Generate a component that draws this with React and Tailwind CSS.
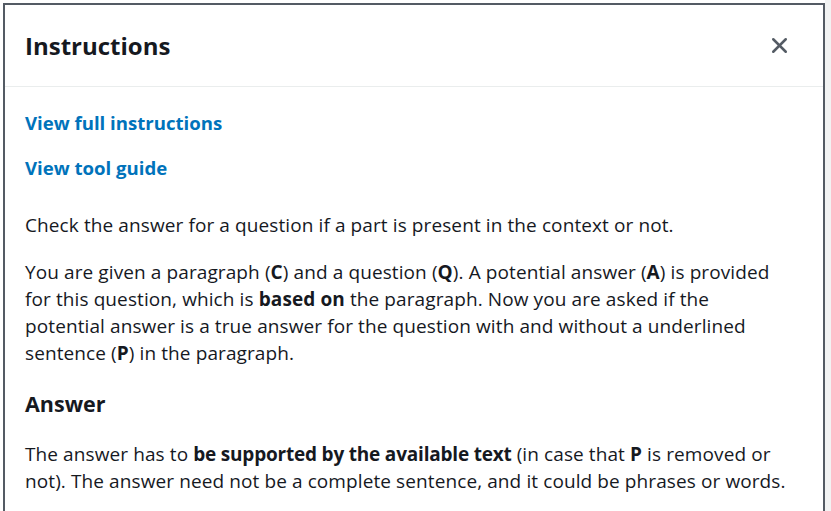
import { X } from 'lucide-react';

export default function App() {
  return (
    <div
      className="flex h-[511px] w-[831px] overflow-hidden bg-white text-[#16191f]"
      style={{ fontFamily: '"Open Sans", "Noto Sans", sans-serif' }}
    >
      <div className="ml-[3px] mt-[3px] flex w-[822px] flex-col border-2 border-b-0 border-[#545b64]">
        <div className="flex h-[82px] shrink-0 items-center justify-between border-b border-[#eaeded] pl-[20px] pr-[31px]">
          <h2 className="text-[24px] font-bold leading-none">Instructions</h2>
          <button className="text-[#545b64]">
            <X size={25} strokeWidth={2.4} />
          </button>
        </div>

        <div className="px-[20px] pt-[22px] text-[19px] leading-[27px] tracking-[0.1px]">
          <a className="block text-[18.6px] font-bold tracking-normal text-[#0073bb]">View full instructions</a>
          <a className="mt-[18px] block text-[18.6px] font-bold tracking-normal text-[#0073bb]">View tool guide</a>

          <p className="mt-[31px]">Check the answer for a question if a part is present in the context or not.</p>

          <p className="mt-[20px] whitespace-nowrap">
            You are given a paragraph (<b>C</b>) and a question (<b>Q</b>). A potential answer (<b>A</b>) is provided
            <br />
            for this question, which is <b>based on</b> the paragraph. Now you are asked if the
            <br />
            potential answer is a true answer for the question with and without a underlined
            <br />
            sentence (<b>P</b>) in the paragraph.
          </p>

          <h3 className="mt-[22px] text-[21.5px] font-bold leading-[30px] tracking-normal">Answer</h3>

          <p className="mt-[22px] whitespace-nowrap">
            The answer has to <b className="tracking-[-0.2px]">be supported by the available text</b> (in case that{' '}
            <b>P</b> is removed or
            <br />
            not). The answer need not be a complete sentence, and it could be phrases or words.
          </p>
        </div>
      </div>
      <div className="flex-1 bg-[#f2f3f3]" />
    </div>
  );
}
